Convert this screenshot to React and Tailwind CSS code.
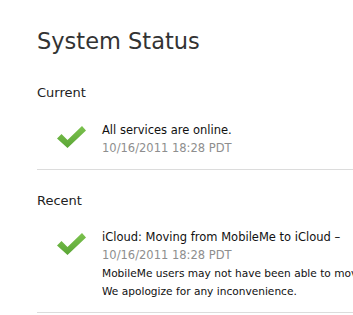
import React from "react";

function Check() {
  return (
    <svg width="29" height="23" viewBox="0 0 29 23" className="block">
      <defs>
        <linearGradient id="g" x1="0" y1="0" x2="0" y2="1">
          <stop offset="0" stopColor="#7cc24e" />
          <stop offset="1" stopColor="#5ba636" />
        </linearGradient>
      </defs>
      <polygon points="0,13.5 4.5,9 10.5,15 25,1 29,5.5 10.5,23" fill="url(#g)" />
    </svg>
  );
}

export default function App() {
  const font = { fontFamily: '"DejaVu Sans", "Liberation Sans", sans-serif' };
  return (
    <div className="w-[353px] h-[315px] overflow-hidden bg-white pl-[37px] pt-[28px]" style={font}>
      <h1 className="text-[22.5px] leading-[26px] text-[#333] whitespace-nowrap">System Status</h1>
      <h2 className="mt-[31px] text-[13px] leading-[16px] text-[#222]">Current</h2>
      <div className="mt-[20px] flex">
        <div className="w-[65px] pl-[20px] pt-[4px] shrink-0">
          <Check />
        </div>
        <div className="text-[11.5px] leading-[18px] whitespace-nowrap">
          <div className="text-[#111]">All services are online.</div>
          <div className="text-[#8e8e8e]">10/16/2011 18:28 PDT</div>
        </div>
      </div>
      <div className="mt-[12px] h-px bg-[#dcdcdc]" />
      <h2 className="mt-[23px] text-[13px] leading-[16px] text-[#222]">Recent</h2>
      <div className="mt-[19px] flex">
        <div className="w-[65px] pl-[20px] pt-[4px] shrink-0">
          <Check />
        </div>
        <div className="min-w-0 overflow-hidden leading-[18px] whitespace-nowrap">
          <div className="text-[11.5px] text-[#111]">iCloud: Moving from MobileMe to iCloud –</div>
          <div className="text-[11.5px] text-[#8e8e8e]">10/16/2011 18:28 PDT</div>
          <div className="text-[10.6px] text-[#111]">MobileMe users may not have been able to mov</div>
          <div className="text-[10.6px] text-[#111]">We apologize for any inconvenience.</div>
        </div>
      </div>
      <div className="mt-[12px] h-px bg-[#dcdcdc]" />
    </div>
  );
}
